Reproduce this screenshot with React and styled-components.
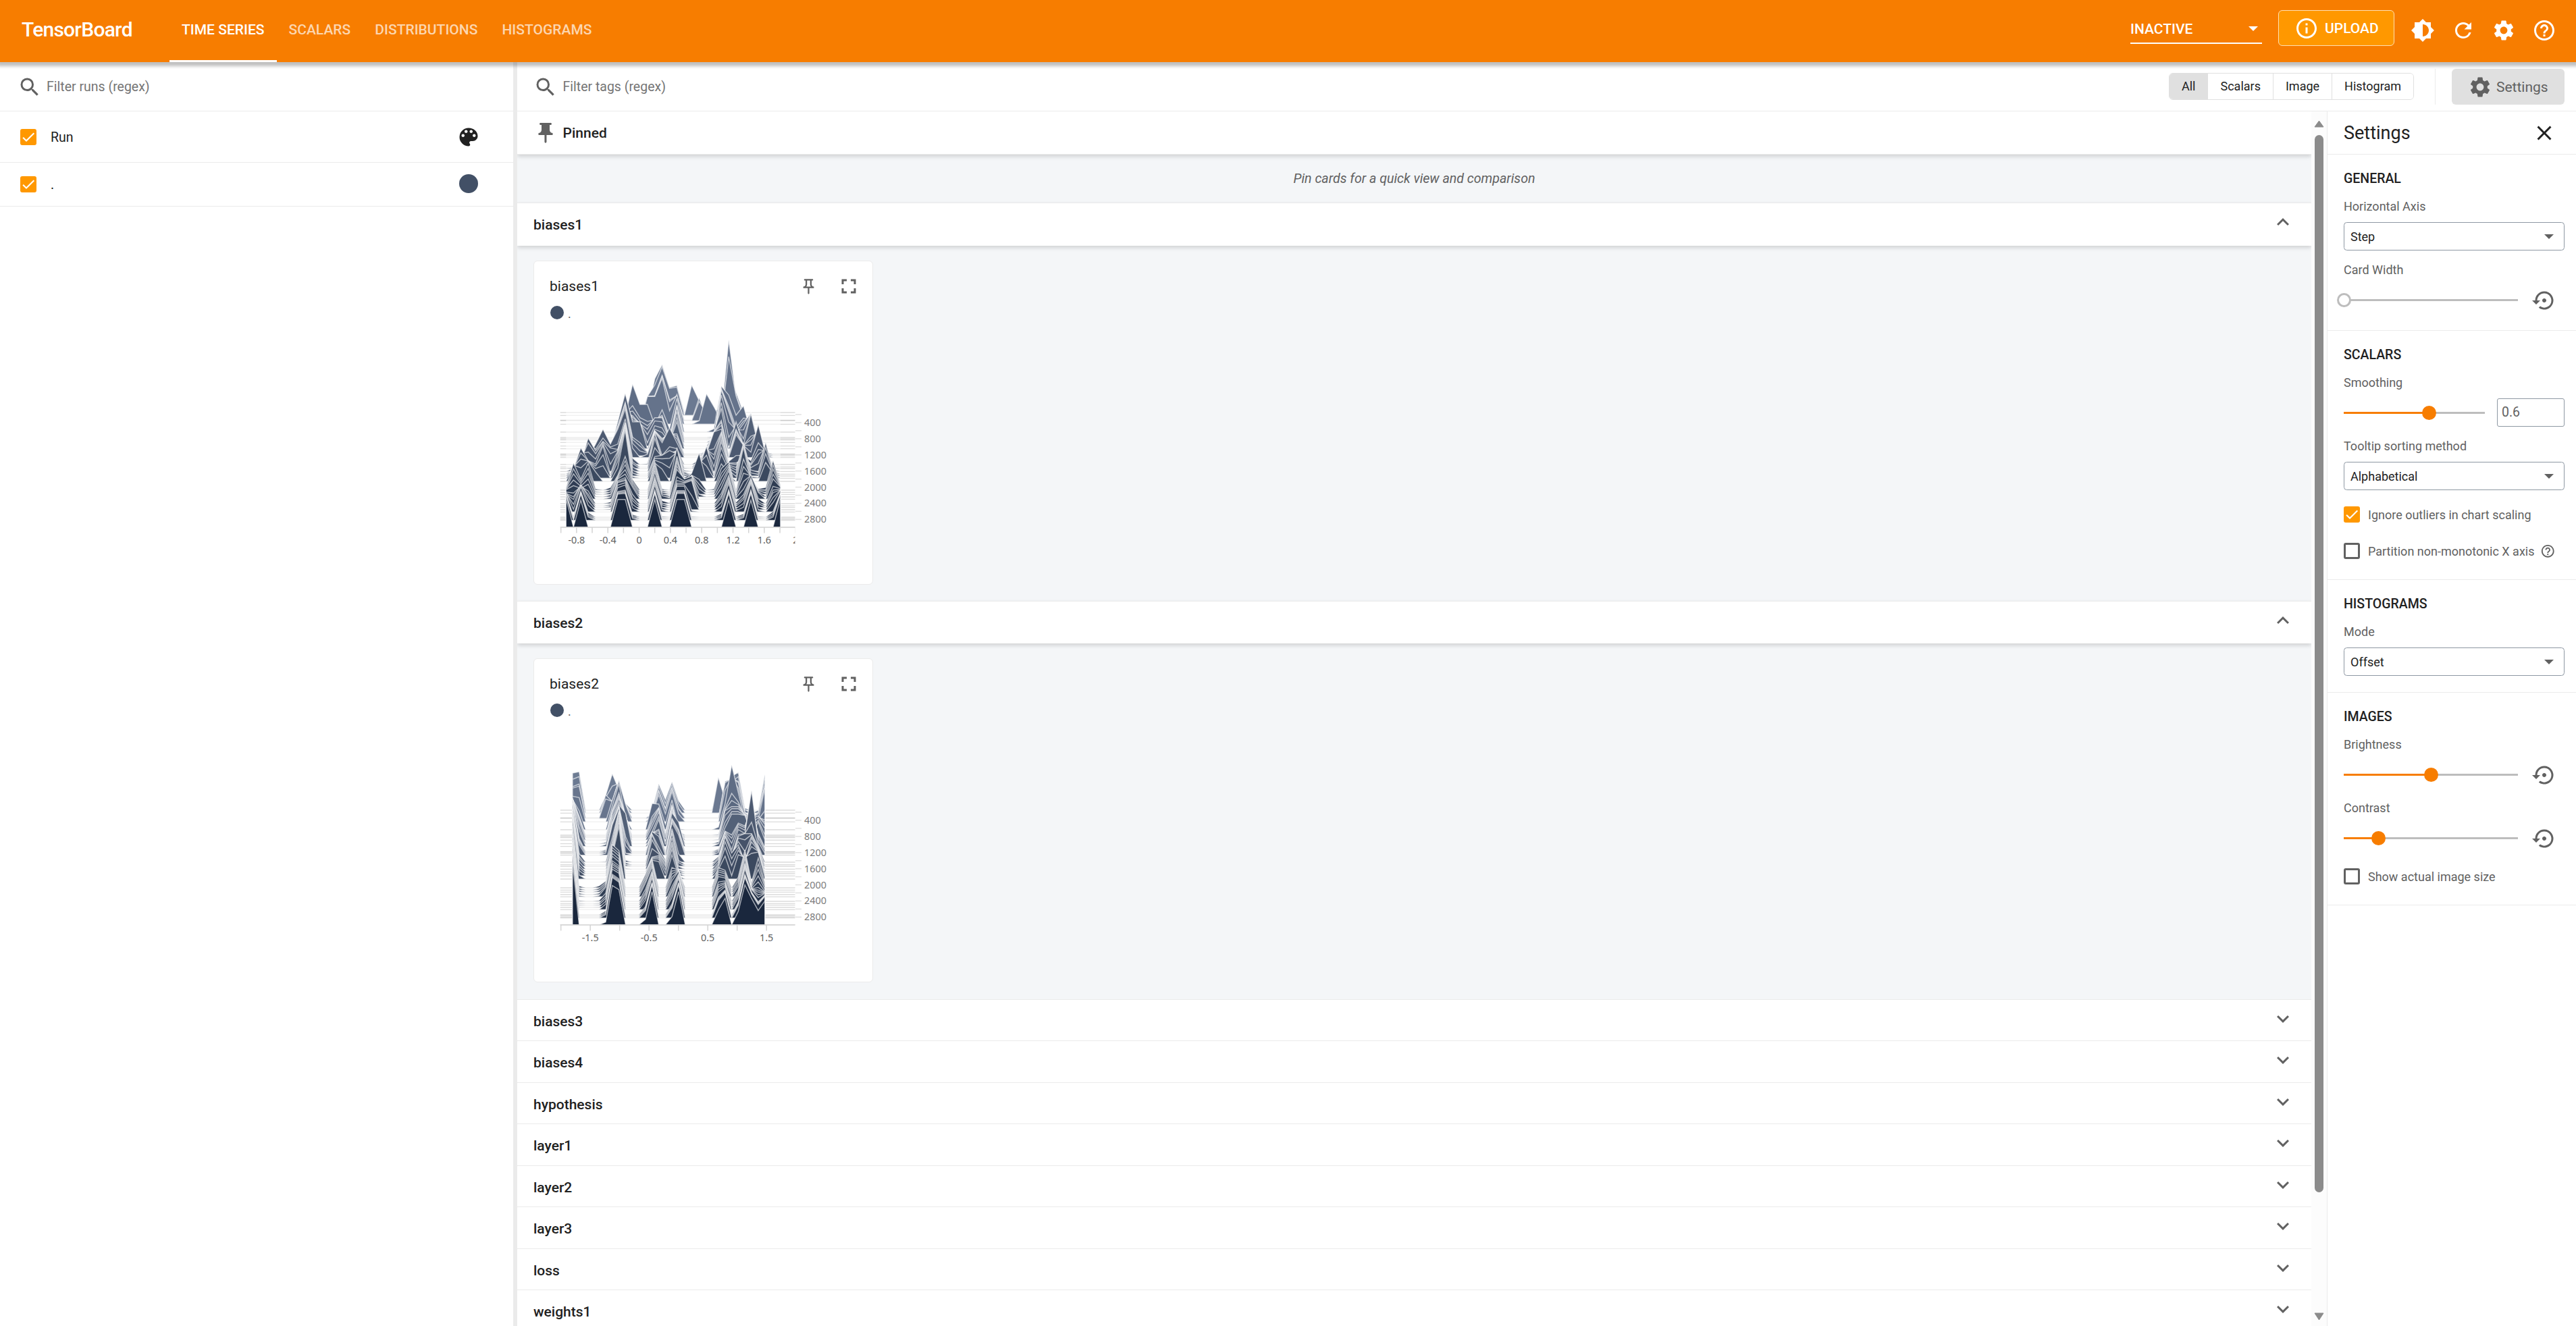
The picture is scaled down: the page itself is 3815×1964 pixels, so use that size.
import React from 'react';
import styled, { createGlobalStyle, css } from 'styled-components';
import {
  MdSearch, MdColorLens, MdInfoOutline, MdBrightness6, MdRefresh, MdSettings, MdHelpOutline,
  MdClose, MdExpandMore, MdExpandLess, MdPushPin, MdOutlinePushPin, MdFullscreen,
  MdSettingsBackupRestore,
} from 'react-icons/md';

const GlobalStyle = createGlobalStyle`
  *, *::before, *::after { box-sizing: border-box; }
  html, body { margin: 0; padding: 0; background: #fff; overflow: hidden; }
  body { font-family: Roboto, "Liberation Sans", sans-serif; color: #212121; font-size: 21px; }
  svg { display: block; flex: none; }
`;

const LINE = '#ebebeb';
const GREY = '#616161';

const Page = styled.div`
  display: flex;
  flex-direction: column;
  width: 3815px;
  height: 1964px;
  overflow: hidden;
`;

/* ---------- top bar ---------- */
const TopBar = styled.header`
  position: relative;
  z-index: 2;
  display: flex;
  align-items: flex-start;
  height: 92px;
  flex: none;
  padding: 0 29px 0 32px;
  background: #f77d00;
  color: #fff;
  box-shadow: 0 1.5px 4.5px 4.5px rgba(0, 0, 0, 0.25);
`;
const Brand = styled.h1`
  width: 219px;
  margin: 0;
  line-height: 87px;
  font-size: 30px;
  font-weight: 500;
  letter-spacing: -0.75px;
`;
const Tabs = styled.nav`
  display: flex;
  flex: 1;
`;
const Tab = styled.a`
  height: 92px;
  padding: 0 18px;
  line-height: 88px;
  font-weight: 500;
  white-space: nowrap;
  color: ${(p) => (p.$active ? '#fff' : 'rgba(255,255,255,0.7)')};
  border-bottom: 3px solid ${(p) => (p.$active ? '#fff' : 'transparent')};
`;
const ReloadSelect = styled.div`
  display: flex;
  align-items: center;
  justify-content: space-between;
  width: 195px;
  height: 43px;
  margin: 22px 24px 0 0;
  padding-right: 6px;
  border-bottom: 2px solid #fff;
  font-weight: 500;
`;
const Triangle = styled.span`
  border: 7.5px solid transparent;
  border-top-color: currentColor;
  border-bottom: 0;
`;
const UploadButton = styled.button`
  display: flex;
  align-items: center;
  gap: 9px;
  width: 172px;
  height: 53px;
  margin: 15px 24px 0 0;
  padding: 0 0 0 23px;
  border: 1px solid #ffe0b2;
  border-radius: 6px;
  background: #ff9800;
  color: #fff;
  font: 500 21px Roboto, sans-serif;
`;
const BarActions = styled.div`
  display: flex;
  gap: 24px;
  margin-top: 27px;
`;

/* ---------- frame ---------- */
const Body = styled.div`
  display: flex;
  flex: 1;
  min-height: 0;
`;
const RunsPane = styled.aside`
  width: 760px;
  flex: none;
`;
const Resizer = styled.div`
  width: 6px;
  flex: none;
  background: ${LINE};
`;
const MainPane = styled.div`
  display: flex;
  flex-direction: column;
  flex: 1;
  min-width: 0;
`;
const FilterBar = styled.div`
  display: flex;
  align-items: center;
  height: 73px;
  flex: none;
  padding: 1px 17px 0 ${(p) => p.$left}px;
  border-bottom: 1px solid ${LINE};
  color: ${GREY};
`;
const FilterText = styled.div`
  flex: 1;
  padding-left: 7.5px;
  font-size: 19.5px;
  color: #757575;
`;

/* ---------- runs ---------- */
const RunRow = styled.div`
  display: flex;
  align-items: center;
  height: ${(p) => p.$height}px;
  padding: 0 48px 0 30px;
  border-bottom: 1px solid ${LINE};
  font-size: 19.5px;
`;
const RunName = styled.div`
  flex: 1;
  padding: 1px 0 0 21px;
`;
const Swatch = styled.span`
  width: ${(p) => p.$size}px;
  height: ${(p) => p.$size}px;
  margin: ${(p) => p.$margin || 0};
  border-radius: 50%;
  background: #425066;
`;
const Box = styled.span`
  display: block;
  width: 24px;
  height: 24px;
  flex: none;
  border-radius: 3px;
  ${(p) => (p.$on ? css`background: #ff9800;` : css`border: 3px solid ${GREY};`)}
`;

const Checkbox = ({ on }) => (
  <Box $on={on}>
    {on && (
      <svg width="24" height="24" viewBox="0 0 24 24">
        <path d="M4.1 12.7 9 17.6 20.3 6.3" fill="none" stroke="#fff" strokeWidth="2.1" />
      </svg>
    )}
  </Box>
);

/* ---------- toolbar ---------- */
const ToggleGroup = styled.div`
  display: flex;
  height: 40px;
  margin: 0 31px 1px 0;
  border: 1px solid #e0e0e0;
  border-radius: 6px;
  overflow: hidden;
`;
const Toggle = styled.span`
  padding: 0 18px;
  line-height: 37px;
  font-size: 18px;
  color: #212121;
  background: ${(p) => (p.$active ? '#e0e0e0' : '#fff')};
  & + & { border-left: 1px solid #e0e0e0; }
`;
const ToolbarRule = styled.div`
  width: 1px;
  height: 53px;
  margin-right: 24px;
  background: ${LINE};
`;
const SettingsButton = styled.button`
  display: flex;
  align-items: center;
  gap: 6px;
  width: 167px;
  height: 53px;
  padding: 0 0 0 24px;
  border: 0;
  border-radius: 6px;
  background: #e0e0e0;
  color: ${GREY};
  font: 400 21px Roboto, sans-serif;
`;

/* ---------- cards ---------- */
const Content = styled.div`
  display: flex;
  flex: 1;
  min-height: 0;
`;
const Groups = styled.main`
  flex: 1;
  min-width: 0;
  overflow: hidden;
`;
const raised = css`
  position: relative;
  box-shadow: 0 3px 6px rgba(0, 0, 0, 0.15);
`;
const PinnedHeader = styled.div`
  ${raised}
  display: flex;
  align-items: center;
  gap: 7.5px;
  height: 64px;
  padding-left: 24px;
  border-bottom: 1px solid ${LINE};
  background: #fff;
  font-weight: 500;
  svg { color: ${GREY}; }
`;
const PinnedHint = styled.div`
  height: 71px;
  line-height: 71px;
  background: #f4f6f8;
  text-align: center;
  font-size: 19.6px;
  font-style: italic;
  color: ${GREY};
`;
const GroupHeader = styled.div`
  ${(p) => p.$open && raised}
  display: flex;
  justify-content: space-between;
  height: ${(p) => p.$height}px;
  padding: 0 24px;
  border-top: 1px solid ${LINE};
  background: #fff;
  svg { margin-top: 10px; color: ${GREY}; }
`;
const GroupTitle = styled.h2`
  margin: 20px 0 0;
  font-size: 21px;
  line-height: 24px;
  font-weight: 500;
`;
const CardGrid = styled.div`
  height: ${(p) => p.$height}px;
  padding: 22px 24px 0;
  background: #f4f6f8;
`;
const Card = styled.article`
  width: 503px;
  height: 480px;
  border: 1px solid ${LINE};
  border-radius: 6px;
  background: #fff;
`;
const CardHead = styled.div`
  display: flex;
  align-items: center;
  height: 61px;
  padding: 13px 17px 0 23px;
  svg { color: ${GREY}; }
`;
const CardTitle = styled.div`
  flex: 1;
`;
const CardAction = styled.span`
  display: flex;
  justify-content: center;
  width: 36px;
  margin-left: 24px;
`;
const CardRun = styled.div`
  display: flex;
  align-items: center;
  gap: 6px;
  height: 32px;
  padding: 0 0 2px 24px;
`;
const CardRunName = styled.span`
  padding-top: 3px;
  font-size: 18px;
  color: ${GREY};
`;

/* ---------- scrollbar ---------- */
const ScrollTrack = styled.div`
  display: flex;
  flex-direction: column;
  align-items: center;
  width: 23px;
  padding: 13px 0 8px;
  background: #fcfcfc;
`;
const ScrollThumb = styled.div`
  width: 13px;
  height: 1566px;
  margin: 11px 0 auto;
  border-radius: 6.5px;
  background: #8b8b8b;
`;

/* ---------- settings panel ---------- */
const Panel = styled.aside`
  width: 369px;
  flex: none;
  border-left: 1px solid ${LINE};
`;
const PanelHead = styled.div`
  display: flex;
  align-items: center;
  justify-content: space-between;
  height: 64px;
  padding: 1px 29px 0 24px;
  border-bottom: 1px solid ${LINE};
  font-size: 27px;
`;
const Section = styled.section`
  padding: 24px 17px ${(p) => p.$bottom || 24}px 24px;
  border-bottom: 1px solid ${LINE};
`;
const SectionTitle = styled.h3`
  margin: 0;
  font-size: 19.5px;
  line-height: 24px;
  font-weight: 500;
`;
const Label = styled.div`
  margin: 17px 0 11px;
  font-size: 18px;
  line-height: 24px;
  color: ${GREY};
`;
const Control = styled.div`
  display: flex;
  align-items: center;
  height: 42px;
  svg { margin: 2px 0 0 21px; color: ${GREY}; }
`;
const SelectBox = styled.div`
  display: flex;
  align-items: center;
  justify-content: space-between;
  height: 42px;
  padding: 0 15px 0 9px;
  border: 1px solid #8e98a3;
  border-radius: 4.5px;
  font-size: 18px;
  span { color: ${GREY}; }
`;
const NumberBox = styled.div`
  width: 100px;
  height: 42px;
  margin-left: 18px;
  padding-left: 6px;
  border: 1px solid #8e98a3;
  border-radius: 3px;
  line-height: 40px;
  font-size: 19.5px;
  color: ${GREY};
`;
const Track = styled.div`
  position: relative;
  width: ${(p) => p.$width}px;
  height: 3px;
  background: linear-gradient(to right, #f77d00 ${(p) => p.$value}%, #bdbdbd ${(p) => p.$value}%);
`;
const Thumb = styled.span`
  position: absolute;
  top: -9px;
  left: ${(p) => p.$value}%;
  width: 21px;
  height: 21px;
  margin-left: -10.5px;
  border-radius: 50%;
  background: ${(p) => (p.$value ? '#f77d00' : '#fff')};
  border: ${(p) => (p.$value ? '0' : '3px solid #bdbdbd')};
`;
const CheckRow = styled.div`
  display: flex;
  align-items: center;
  height: 24px;
  margin-top: ${(p) => p.$top}px;
  font-size: 18px;
  white-space: nowrap;
  color: ${GREY};
`;
const CheckText = styled.span`
  padding: 0 8px 0 12px;
`;

const Slider = ({ width = 258, value }) => (
  <Track $width={width} $value={value}>
    <Thumb $value={value} />
  </Track>
);

/* ---------- histogram chart ---------- */
const AxisText = styled.text`
  font: 14.4px "Noto Sans", "Open Sans", sans-serif;
  fill: ${(p) => (p.$soft ? '#7c7c7c' : '#616161')};
  text-anchor: ${(p) => (p.$soft ? 'start' : 'middle')};
`;

const BASELINES = [
  611, 615.3, 622.3, 623.2, 628.3, 640, 648, 650, 651.7, 655.3, 660.7, 664.7, 672.3, 673.5, 675.3,
  677.7, 688, 691.7, 694, 698.3, 702.3, 705, 708.3, 713, 726, 729.3, 732.3, 736, 739.3, 746,
  749.3, 751.7, 755, 758.3, 766, 767.7, 769.3, 770.7, 780.7,
];

/* sparse bin heights at some baselines; steps between them are interpolated */
const BIASES1 = {
  x0: 838.3,
  pitch: 10.95,
  keys: [
    [611, { 12: 50, 13: 71, 14: 37, 15: 40, 22: 75, 21: 10, 23: 30 }],
    [615.3, { 11: 28, 12: 45, 13: 72, 14: 40, 15: 42, 17: 45, 18: 22, 22: 112, 23: 28 }],
    [622.3, { 11: 35, 12: 36, 13: 66, 14: 30, 15: 36, 18: 33, 19: 5, 22: 84, 23: 34 }],
    [628.3, { 10: 0, 11: 41, 12: 41, 13: 68, 14: 20, 15: 44, 18: 5, 19: 45, 20: 26, 21: 5, 22: 100, 23: 42, 24: 10 }],
    [640, { 8: 24, 9: 71, 10: 41, 11: 41, 12: 10, 13: 33, 14: 5, 15: 50, 20: 5, 21: 68, 22: 55, 23: 25, 24: 39 }],
    [651.7, { 8: 40, 9: 36, 10: 24, 11: 16, 12: 33, 13: 33, 14: 0, 15: 48, 20: 0, 21: 74, 22: 42, 23: 10, 24: 24, 25: 40 }],
    [664.7, { 7: 40, 8: 82, 9: 40, 10: 40, 11: 0, 12: 29, 13: 24, 14: 10, 15: 40, 20: 25, 21: 60, 22: 0, 23: 40, 24: 5, 25: 52, 26: 5 }],
    [677.7, { 4: 20, 5: 42, 6: 20, 7: 42, 8: 72, 9: 14, 11: 5, 12: 38, 13: 22, 14: 44, 15: 22, 19: 6, 20: 38, 21: 42, 22: 0, 23: 34, 24: 18, 25: 8, 26: 49, 27: 5 }],
    [691.7, { 2: 6, 3: 43, 4: 24, 5: 38, 6: 28, 7: 26, 8: 66, 9: 8, 12: 50, 13: 10, 14: 20, 15: 24, 18: 10, 19: 26, 20: 18, 21: 50, 22: 6, 23: 6, 24: 12, 25: 5, 26: 26, 27: 24 }],
    [702.3, { 1: 8, 2: 39, 3: 20, 4: 15, 5: 42, 6: 0, 7: 32, 8: 72, 9: 6, 12: 26, 13: 28, 14: 35, 15: 30, 16: 3, 18: 10, 19: 41, 20: 0, 21: 48, 22: 12, 23: 6, 24: 46, 25: 6, 26: 3, 27: 47, 28: 5 }],
    [713, { 1: 24, 2: 20, 3: 30, 4: 14, 5: 0, 6: 0, 7: 20, 8: 76, 9: 0, 12: 27, 13: 18, 14: 0, 15: 50, 16: 0, 17: 12, 18: 42, 19: 0, 21: 26, 22: 12, 23: 0, 24: 51, 25: 0, 27: 28, 28: 12, 29: 0 }],
    [726, { 0: 4, 1: 40, 2: 16, 3: 40, 4: 2, 6: 4, 7: 22, 8: 50, 9: 16, 12: 42, 13: 2, 15: 50, 16: 8, 17: 22, 18: 16, 20: 2, 21: 32, 22: 42, 24: 46, 25: 20, 26: 2, 27: 4, 28: 44, 29: 8 }],
    [739.3, { 0: 14, 1: 20, 2: 16, 3: 22, 4: 0, 6: 3, 7: 30, 8: 37, 9: 18, 10: 0, 12: 40, 13: 5, 14: 2, 15: 44, 16: 30, 17: 34, 18: 0, 21: 17, 22: 42, 23: 2, 24: 15, 25: 36, 26: 10, 28: 30, 29: 18 }],
    [751.7, { 0: 20, 1: 12, 2: 34, 3: 16, 6: 2, 7: 37, 8: 40, 9: 10, 12: 40, 13: 4, 15: 36, 16: 36, 17: 40, 18: 0, 21: 14, 22: 42, 23: 2, 24: 12, 25: 40, 26: 6, 28: 22, 29: 26 }],
    [758.3, { 0: 29, 1: 4, 2: 37, 3: 10, 7: 36, 8: 40, 9: 6, 12: 40, 13: 3, 15: 38, 16: 38, 17: 2, 21: 8, 22: 42, 23: 2, 24: 7, 25: 42, 26: 3, 28: 14, 29: 32 }],
    [770.7, { 0: 37, 2: 39, 3: 5, 7: 39, 8: 40, 9: 3, 12: 40, 15: 40, 16: 40, 21: 4, 22: 40, 24: 4, 25: 40, 28: 5, 29: 38 }],
    [780.7, { 0: 42, 2: 40, 7: 41, 8: 41, 12: 41, 15: 41, 16: 41, 22: 40, 25: 40, 29: 42 }],
  ],
  ticks: Array.from({ length: 16 }, (_, i) => 830.7 + i * 23.17),
  labels: [[1, '-0.8'], [3, '-0.4'], [5, '0'], [7, '0.4'], [9, '0.8'], [11, '1.2'], [13, '1.6'], [15, '2']],
};

const BIASES2 = {
  x0: 847.9,
  pitch: 9.82,
  keys: [
    [611, { 0: 55, 1: 57, 5: 22, 6: 54, 7: 30, 8: 10, 13: 39, 14: 16, 15: 42, 16: 14, 22: 36, 23: 26, 24: 50, 25: 56, 26: 3, 29: 53 }],
    [615.3, { 0: 50, 1: 54, 5: 23, 6: 40, 7: 44, 8: 12, 13: 39, 14: 14, 15: 42, 16: 14, 22: 53, 23: 20, 24: 46, 25: 54, 26: 5, 28: 4, 29: 50 }],
    [622.3, { 0: 46, 1: 50, 5: 34, 6: 24, 7: 56, 8: 20, 12: 6, 13: 40, 14: 14, 15: 44, 16: 14, 23: 54, 24: 58, 25: 54, 26: 8, 28: 8, 29: 48 }],
    [628.3, { 0: 38, 1: 36, 6: 32, 7: 60, 8: 26, 12: 10, 13: 40, 14: 12, 15: 45, 16: 12, 23: 47, 24: 66, 25: 50, 26: 12, 28: 3, 29: 50 }],
    [640, { 0: 45, 1: 28, 6: 35, 7: 68, 8: 18, 12: 39, 13: 38, 14: 8, 15: 44, 16: 2, 22: 4, 23: 38, 24: 96, 25: 55, 26: 15, 27: 5, 28: 15, 29: 28 }],
    [651.7, { 0: 58, 1: 28, 6: 38, 7: 60, 8: 32, 12: 22, 13: 42, 14: 4, 15: 46, 16: 8, 23: 40, 24: 46, 25: 46, 26: 34, 27: 28, 28: 32, 29: 20 }],
    [664.7, { 0: 68, 1: 24, 5: 3, 6: 40, 7: 62, 8: 49, 12: 16, 13: 40, 14: 3, 15: 50, 16: 36, 22: 4, 23: 28, 24: 48, 25: 48, 26: 46, 27: 18, 28: 36, 29: 10 }],
    [677.7, { 0: 76, 1: 16, 5: 3, 6: 45, 7: 70, 8: 3, 12: 35, 13: 28, 14: 0, 15: 48, 16: 30, 22: 4, 23: 32, 24: 8, 25: 38, 26: 32, 27: 96, 28: 20, 29: 3 }],
    [691.7, { 0: 82, 1: 12, 6: 34, 7: 78, 8: 3, 12: 44, 13: 20, 14: 5, 15: 50, 16: 6, 22: 10, 23: 40, 24: 10, 25: 42, 26: 46, 27: 46, 28: 26, 29: 0 }],
    [702.3, { 0: 85, 1: 10, 6: 32, 7: 79, 12: 22, 13: 24, 14: 8, 15: 44, 16: 3, 21: 0, 22: 12, 23: 52, 24: 28, 25: 40, 26: 14, 27: 50, 28: 32, 29: 0 }],
    [713, { 0: 88, 1: 6, 6: 34, 7: 78, 12: 28, 13: 26, 14: 0, 15: 36, 16: 5, 22: 14, 23: 34, 24: 5, 25: 36, 26: 32, 27: 38, 28: 40, 29: 3 }],
    [726, { 0: 92, 1: 3, 4: 3, 5: 10, 6: 64, 7: 55, 11: 20, 12: 42, 15: 30, 16: 26, 22: 30, 23: 26, 24: 0, 25: 16, 26: 56, 27: 8, 28: 44, 29: 8 }],
    [739.3, { 0: 90, 1: 2, 4: 2, 5: 14, 6: 60, 7: 52, 11: 20, 12: 44, 15: 24, 16: 38, 22: 30, 23: 28, 24: 0, 25: 16, 26: 56, 27: 12, 28: 22, 29: 8 }],
    [758.3, { 0: 92, 5: 8, 6: 60, 7: 54, 11: 14, 12: 47, 15: 18, 16: 46, 22: 26, 23: 34, 25: 18, 26: 60, 27: 30, 28: 18, 29: 24 }],
    [770.7, { 0: 92, 5: 5, 6: 60, 7: 53, 11: 11, 12: 49, 15: 15, 16: 49, 22: 26, 23: 38, 25: 19, 26: 60, 27: 36, 28: 20, 29: 32 }],
    [780.7, { 0: 92, 5: 4, 6: 58, 7: 52, 11: 8, 12: 49, 15: 12, 16: 49, 22: 22, 23: 39, 25: 20, 26: 59, 27: 39, 28: 21, 29: 35 }],
  ],
  ticks: Array.from({ length: 9 }, (_, i) => 830.7 + i * 43.5),
  labels: [[1, '-1.5'], [3, '-0.5'], [5, '0.5'], [7, '1.5']],
};

const heightsAt = (keys, y) => {
  let i = 0;
  while (i < keys.length - 2 && keys[i + 1][0] < y) i += 1;
  const [ya, a] = keys[i];
  const [yb, b] = keys[i + 1];
  const t = Math.min(1, Math.max(0, (y - ya) / (yb - ya)));
  return Array.from({ length: 30 }, (_, k) => (a[k] || 0) * (1 - t) + (b[k] || 0) * t);
};

const fillAt = (y) => {
  const t = (y - 602) / (780.7 - 602);
  const mix = (a, b) => Math.round(a + (b - a) * t);
  return `rgb(${mix(114, 26)},${mix(128, 39)},${mix(152, 61)})`;
};

const STEP_LABELS = ['400', '800', '1200', '1600', '2000', '2400', '2800'];

const Histogram = ({ id, data }) => {
  const { x0, pitch, keys, ticks, labels } = data;
  return (
    <svg width="500" height="385" viewBox="791 480 500 385">
      <defs>
        <clipPath id={id}>
          <rect x="829.5" y="480" width="348" height="330" />
        </clipPath>
      </defs>
      <g clipPath={`url(#${id})`}>
        {BASELINES.map((y) => {
          const pts = heightsAt(keys, y).map((h, k) => `${(x0 + k * pitch).toFixed(1)},${(y - h).toFixed(1)}`);
          const end = x0 + 29 * pitch;
          return (
            <g key={y}>
              <line x1="829.5" x2="1178" y1={y} y2={y} stroke="#000" strokeOpacity="0.14" strokeWidth="1.3" />
              <path
                d={`M${x0},${y}L${pts.join('L')}L${end},${y}Z`}
                fill={fillAt(y)}
                stroke="#fff"
                strokeOpacity="0.62"
                strokeWidth="1.4"
              />
            </g>
          );
        })}
        <line x1="829.5" x2="1178" y1="781" y2="781" stroke="#d4d4d4" strokeWidth="1.5" />
        {ticks.map((x) => (
          <line key={x} x1={x} x2={x} y1="781" y2="789.5" stroke="#d4d4d4" strokeWidth="1.5" />
        ))}
        {labels.map(([i, text]) => (
          <AxisText key={text} x={ticks[i]} y="804.5">{text}</AxisText>
        ))}
      </g>
      {Array.from({ length: 14 }, (_, i) => (
        <line key={i} x1="1178" x2="1187" y1={614 + i * 11.95} y2={614 + i * 11.95} stroke="#e2e2e2" strokeWidth="1.5" />
      ))}
      {STEP_LABELS.map((text, i) => (
        <AxisText key={text} $soft x="1191" y={631.3 + i * 23.8}>{text}</AxisText>
      ))}
    </svg>
  );
};

const HistogramCard = ({ title, data }) => (
  <Card>
    <CardHead>
      <CardTitle>{title}</CardTitle>
      <CardAction><MdOutlinePushPin size={27} /></CardAction>
      <CardAction><MdFullscreen size={36} /></CardAction>
    </CardHead>
    <CardRun><Swatch $size={20} /><CardRunName>.</CardRunName></CardRun>
    <Histogram id={`clip-${title}`} data={data} />
  </Card>
);

const COLLAPSED = [
  ['biases3', 61], ['biases4', 62], ['hypothesis', 61], ['layer1', 62],
  ['layer2', 61], ['layer3', 62], ['loss', 61], ['weights1', 62],
];

const OpenGroup = ({ title, head, body, data }) => (
  <>
    <GroupHeader $open $height={head}>
      <GroupTitle>{title}</GroupTitle>
      <MdExpandLess size={36} />
    </GroupHeader>
    <CardGrid $height={body}>
      <HistogramCard title={title} data={data} />
    </CardGrid>
  </>
);

const Scrollbar = () => (
  <ScrollTrack>
    <svg width="15" height="11" viewBox="0 0 15 11"><path d="M7.5 1 14 10H1Z" fill="#8b8b8b" stroke="#8b8b8b" strokeLinejoin="round" /></svg>
    <ScrollThumb />
    <svg width="15" height="12" viewBox="0 0 15 12"><path d="M7.5 11 14 1H1Z" fill="#8b8b8b" stroke="#8b8b8b" strokeLinejoin="round" /></svg>
  </ScrollTrack>
);

const SettingsPanel = () => (
  <Panel>
    <PanelHead>Settings<MdClose size={36} /></PanelHead>
    <Section>
      <SectionTitle>GENERAL</SectionTitle>
      <Label>Horizontal Axis</Label>
      <SelectBox>Step<Triangle /></SelectBox>
      <Label>Card Width</Label>
      <Control><Slider value={0} /><MdSettingsBackupRestore size={36} /></Control>
    </Section>
    <Section $bottom={30}>
      <SectionTitle>SCALARS</SectionTitle>
      <Label>Smoothing</Label>
      <Control><Slider width={209} value={60.5} /><NumberBox>0.6</NumberBox></Control>
      <Label>Tooltip sorting method</Label>
      <SelectBox>Alphabetical<Triangle /></SelectBox>
      <CheckRow $top={24}><Checkbox on /><CheckText>Ignore outliers in chart scaling</CheckText></CheckRow>
      <CheckRow $top={30}>
        <Checkbox /><CheckText>Partition non-monotonic X axis</CheckText><MdHelpOutline size={22.5} />
      </CheckRow>
    </Section>
    <Section>
      <SectionTitle>HISTOGRAMS</SectionTitle>
      <Label>Mode</Label>
      <SelectBox>Offset<Triangle /></SelectBox>
    </Section>
    <Section $bottom={30}>
      <SectionTitle>IMAGES</SectionTitle>
      <Label>Brightness</Label>
      <Control><Slider value={50} /><MdSettingsBackupRestore size={36} /></Control>
      <Label>Contrast</Label>
      <Control><Slider value={20} /><MdSettingsBackupRestore size={36} /></Control>
      <CheckRow $top={24}><Checkbox /><CheckText>Show actual image size</CheckText></CheckRow>
    </Section>
  </Panel>
);

export default function App() {
  return (
    <Page>
      <GlobalStyle />
      <TopBar>
        <Brand>TensorBoard</Brand>
        <Tabs>
          <Tab $active>TIME SERIES</Tab>
          <Tab>SCALARS</Tab>
          <Tab>DISTRIBUTIONS</Tab>
          <Tab>HISTOGRAMS</Tab>
        </Tabs>
        <ReloadSelect>INACTIVE<Triangle /></ReloadSelect>
        <UploadButton><MdInfoOutline size={36} />UPLOAD</UploadButton>
        <BarActions>
          <MdBrightness6 size={36} />
          <MdRefresh size={36} />
          <MdSettings size={36} />
          <MdHelpOutline size={36} />
        </BarActions>
      </TopBar>
      <Body>
        <RunsPane>
          <FilterBar $left={25.5}>
            <MdSearch size={36} />
            <FilterText>Filter runs (regex)</FilterText>
          </FilterBar>
          <RunRow $height={76}>
            <Checkbox on />
            <RunName>Run</RunName>
            <MdColorLens size={36} />
          </RunRow>
          <RunRow $height={65}>
            <Checkbox on />
            <RunName>.</RunName>
            <Swatch $size={28} $margin="0 4px 2px 0" />
          </RunRow>
        </RunsPane>
        <Resizer />
        <MainPane>
          <FilterBar $left={24}>
            <MdSearch size={36} />
            <FilterText>Filter tags (regex)</FilterText>
            <ToggleGroup>
              <Toggle $active>All</Toggle>
              <Toggle>Scalars</Toggle>
              <Toggle>Image</Toggle>
              <Toggle>Histogram</Toggle>
            </ToggleGroup>
            <ToolbarRule />
            <SettingsButton><MdSettings size={36} />Settings</SettingsButton>
          </FilterBar>
          <Content>
            <Groups>
              <PinnedHeader><MdPushPin size={36} />Pinned</PinnedHeader>
              <PinnedHint>Pin cards for a quick view and comparison</PinnedHint>
              <OpenGroup title="biases1" head={64} body={526} data={BIASES1} />
              <OpenGroup title="biases2" head={63} body={527} data={BIASES2} />
              {COLLAPSED.map(([title, height]) => (
                <GroupHeader key={title} $height={height}>
                  <GroupTitle>{title}</GroupTitle>
                  <MdExpandMore size={36} />
                </GroupHeader>
              ))}
            </Groups>
            <Scrollbar />
            <SettingsPanel />
          </Content>
        </MainPane>
      </Body>
    </Page>
  );
}
